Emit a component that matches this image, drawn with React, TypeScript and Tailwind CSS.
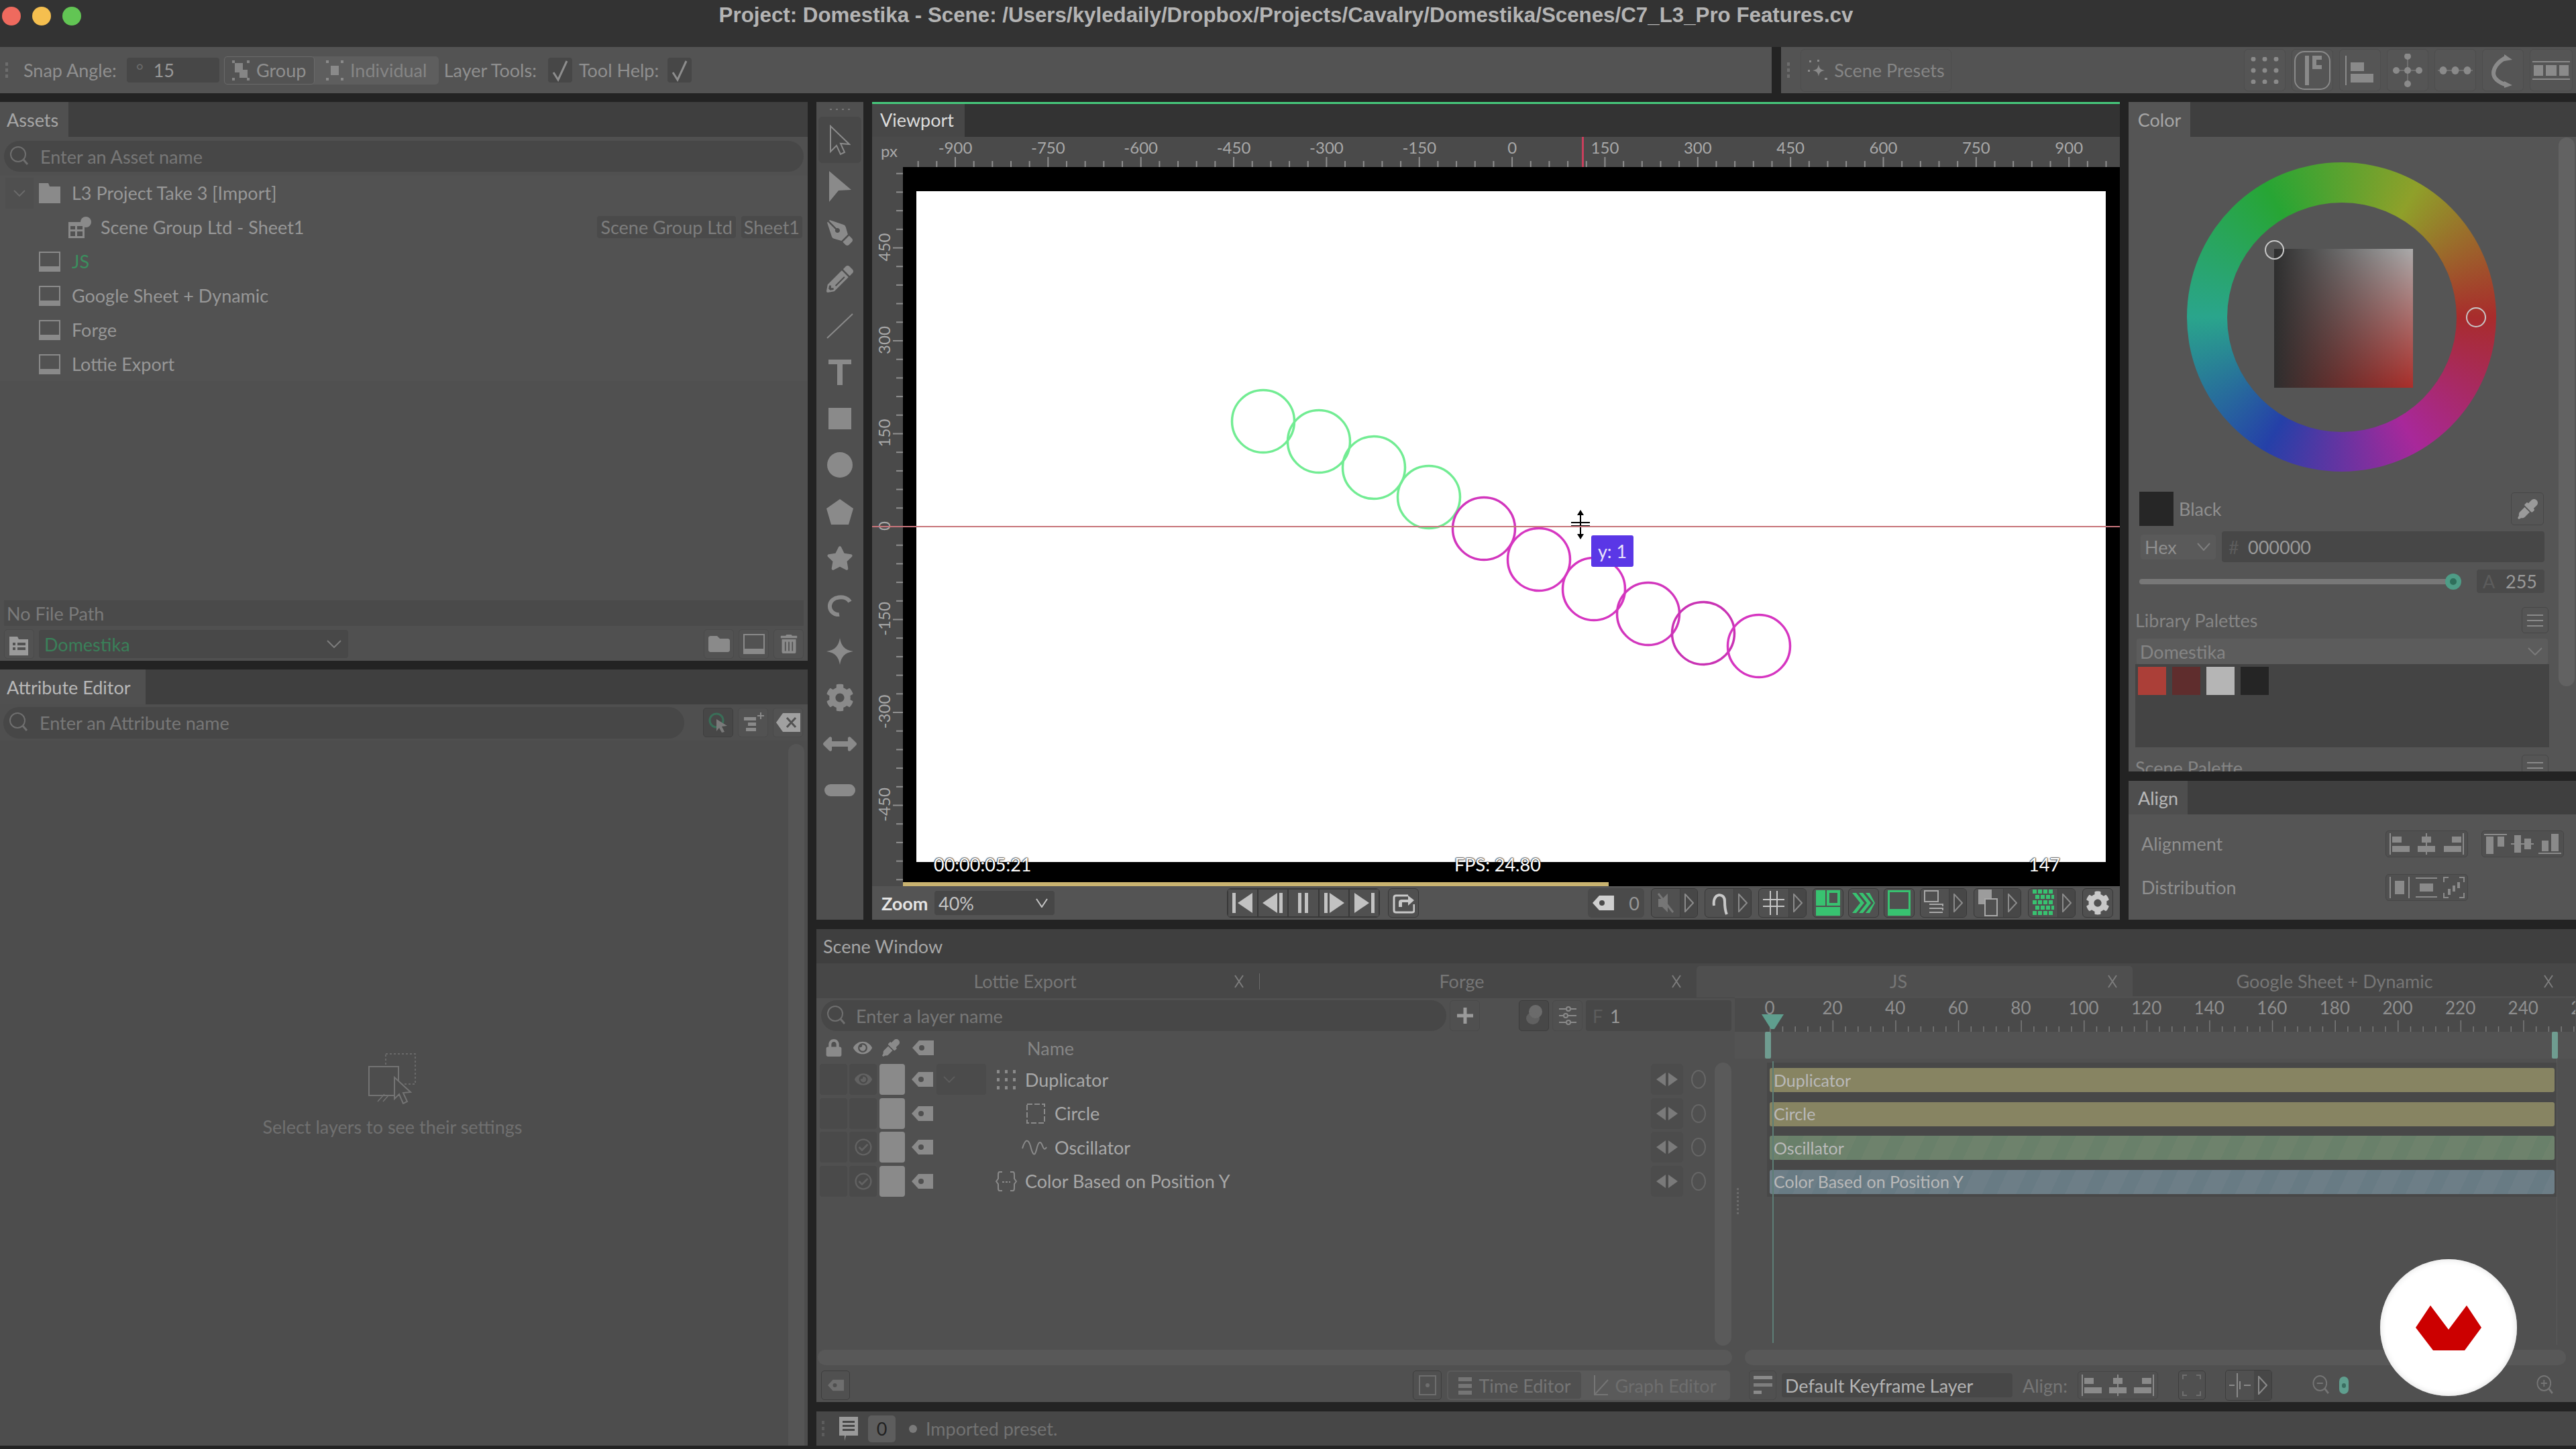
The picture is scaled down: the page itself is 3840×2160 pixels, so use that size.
import React from "react";
import { FaCog, FaStar, FaPenNib, FaPencilAlt, FaArrowsAltH, FaEyeDropper, FaTrashAlt, FaFolder, FaLock, FaEye, FaRegCheckCircle } from "react-icons/fa";

type P = { w: number; h: number; className?: string; children?: React.ReactNode };
const S = ({ w, h, className = "", children }: P) => (
  <svg width={w} height={h} viewBox={`0 0 ${w} ${h}`} fill="currentColor" className={`shrink-0 ${className}`}>{children}</svg>
);

const Mag = ({ className = "text-[#6f6f6f]", sign = "" }: { className?: string; sign?: string }) => (
  <S w={32} h={32} className={className}>
    <circle cx="13" cy="13" r="11" fill="none" stroke="currentColor" strokeWidth="2" />
    <path d="M21 21l6 7" stroke="currentColor" strokeWidth="3" />
    {sign && <path d={sign === "+" ? "M8 13H18M13 8V18" : "M8 13H18"} stroke="currentColor" strokeWidth="2" />}
  </S>
);
const Monitor = () => (
  <S w={32} h={30} className="text-[#8a8a8a]">
    <rect x="1" y="1" width="30" height="28" fill="none" stroke="currentColor" strokeWidth="2" />
    <rect x="1" y="22" width="30" height="7" />
  </S>
);
const Chevron = ({ w = 22, h = 12, className = "text-[#7d7d7d]" }: { w?: number; h?: number; className?: string }) => (
  <S w={w} h={h} className={className}>
    <path d={`M1 1L${w / 2} ${h - 1}L${w - 1} 1`} fill="none" stroke="currentColor" strokeWidth="2" />
  </S>
);
const Tag = ({ className = "text-[#8a8a8a]" }: { className?: string }) => (
  <S w={32} h={24} className={className}>
    <path fillRule="evenodd" d="M0 12L10 1H32V23H10ZM14 8a4 4 0 100 8a4 4 0 000-8Z" />
  </S>
);
const Cross = () => (
  <S w={16} h={22} className="text-[#7c7c7c]">
    <path d="M2 2L14 20M14 2L2 20" fill="none" stroke="currentColor" strokeWidth="2" />
  </S>
);
const Check = () => (
  <S w={26} h={34} className="text-[#8d8d8d]">
    <path d="M3 20L10 31L23 3" fill="none" stroke="currentColor" strokeWidth="3" />
  </S>
);
const Burger = () => (
  <S w={24} h={18} className="text-[#8a8a8a]">
    <path d="M0 1H24M0 9H24M0 17H24" stroke="currentColor" strokeWidth="2" />
  </S>
);
const Grip = ({ className = "text-[#6d6d6d]" }: { className?: string }) => (
  <S w={4} h={24} className={className}>
    <rect y="0" width="4" height="5" />
    <rect y="9" width="4" height="5" />
    <rect y="18" width="4" height="5" />
  </S>
);

const AlignH = ({ flip = false, mid = false }: { flip?: boolean; mid?: boolean }) => (
  <S w={32} h={32} className="text-[#8a8a8a]">
    {mid ? (
      <>
        <rect x="15" y="0" width="2" height="32" />
        <rect x="9" y="5" width="14" height="9" />
        <rect x="3" y="19" width="26" height="9" />
      </>
    ) : flip ? (
      <>
        <rect x="29" y="0" width="2" height="32" />
        <rect x="13" y="5" width="14" height="9" />
        <rect x="1" y="19" width="26" height="9" />
      </>
    ) : (
      <>
        <rect x="1" y="0" width="2" height="32" />
        <rect x="5" y="5" width="14" height="9" />
        <rect x="5" y="19" width="26" height="9" />
      </>
    )}
  </S>
);
const AlignV = ({ kind }: { kind: 0 | 1 | 2 }) => (
  <S w={34} h={32} className="text-[#8a8a8a]">
    {kind === 0 && (
      <>
        <rect x="0" y="1" width="34" height="2" />
        <rect x="3" y="5" width="11" height="26" />
        <rect x="20" y="5" width="10" height="15" />
      </>
    )}
    {kind === 1 && (
      <>
        <rect x="0" y="15" width="34" height="2" />
        <rect x="5" y="3" width="10" height="26" />
        <rect x="20" y="8" width="10" height="16" />
      </>
    )}
    {kind === 2 && (
      <>
        <rect x="0" y="29" width="34" height="2" />
        <rect x="5" y="11" width="10" height="16" />
        <rect x="19" y="1" width="11" height="26" />
      </>
    )}
  </S>
);
const AlignGroup = ({ children }: { children: React.ReactNode }) => (
  <div className="flex h-[40px] w-[123px] items-center justify-around rounded-[5px] border border-[#464646] bg-[#505050]">{children}</div>
);

const Panel = ({ title, w, bright = false }: { title: string; w: number; bright?: boolean }) => (
  <div className="flex h-[52px] shrink-0 bg-[#3f3f3f]">
    <div style={{ width: w }} className={`flex items-center pl-[10px] bg-[#505050] ${bright ? "text-[#b8b8b8]" : "text-[#a6a6a6]"}`}>{title}</div>
  </div>
);

const AssetRow = ({ name, green = false }: { name: string; green?: boolean }) => (
  <div className="flex h-[51px] items-center pl-[58px]">
    <Monitor />
    <span className={`ml-[17px] ${green ? "text-[#3b8f5e]" : "text-[#979797]"}`}>{name}</span>
  </div>
);
const SmallBtn = ({ children }: { children: React.ReactNode }) => (
  <div className="flex h-[44px] w-[45px] items-center justify-center rounded-[5px] border border-[#4a4a4a] bg-[#525252] text-[#8a8a8a]">{children}</div>
);

const Assets = () => (
  <div className="flex h-[833px] shrink-0 flex-col bg-[#505050]">
    <Panel title="Assets" w={102} />
    <div className="mx-[6px] mt-[6px] flex h-[46px] shrink-0 items-center rounded-full bg-[#474747] pl-[8px] text-[#777777]">
      <Mag />
      <span className="ml-[14px]">Enter an Asset name</span>
    </div>
    <div className="mt-[6px] h-[306px] shrink-0 bg-[#525252]">
      <div className="flex h-[51px] items-center pl-[8px]">
        <div className="flex h-[46px] w-[42px] items-center justify-center bg-[#4f4f4f]"><Chevron w={18} h={10} className="text-[#6a6a6a]" /></div>
        <S w={32} h={30} className="ml-[8px] text-[#8a8a8a]"><path d="M0 0H14L16 5H32V30H0Z" /></S>
        <span className="ml-[17px] text-[#979797]">L3 Project Take 3 [Import]</span>
      </div>
      <div className="flex h-[51px] items-center pl-[102px] pr-[8px]">
        <S w={34} h={32} className="text-[#8a8a8a]">
          <path fillRule="evenodd" d="M0 8H24V32H0ZM3 14V19H10V14ZM13 14V19H21V14ZM3 22V29H10V22ZM13 22V29H21V22Z" />
          <circle cx="26" cy="8" r="8" />
        </S>
        <span className="ml-[14px] text-[#979797]">Scene Group Ltd - Sheet1</span>
        <span className="ml-auto rounded-[4px] bg-[#4a4a4a] px-[5px] py-[3px] text-[#7d7d7d]">Scene Group Ltd</span>
        <span className="ml-[8px] rounded-[4px] bg-[#4a4a4a] px-[4px] py-[3px] text-[#7d7d7d]">Sheet1</span>
      </div>
      <AssetRow name="JS" green />
      <AssetRow name="Google Sheet + Dynamic" />
      <AssetRow name="Forge" />
      <AssetRow name="Lottie Export" />
    </div>
    <div className="mx-[6px] mt-auto flex h-[38px] shrink-0 items-center bg-[#4a4a4a] pl-[4px] text-[#7a7a7a]">No File Path</div>
    <div className="mb-[4px] mt-[6px] flex h-[42px] shrink-0 items-center px-[6px]">
      <SmallBtn>
        <S w={30} h={34} className="text-[#9a9a9a]">
          <path fillRule="evenodd" d="M0 6H12L14 10H28V34H0ZM5 15V19H9V15ZM12 15V19H24V15ZM5 22V26H9V22ZM12 22V26H24V22Z" />
        </S>
      </SmallBtn>
      <div className="ml-[7px] flex h-[42px] w-[461px] items-center justify-between rounded-[4px] bg-[#484848] pl-[8px] pr-[10px] text-[#3a8059]">
        Domestika
        <Chevron />
      </div>
      <div className="ml-auto flex gap-[7px]">
        <SmallBtn><FaFolder size={32} /></SmallBtn>
        <SmallBtn><Monitor /></SmallBtn>
        <SmallBtn><FaTrashAlt size={28} /></SmallBtn>
      </div>
    </div>
  </div>
);

const AttributeEditor = () => (
  <div className="flex flex-1 flex-col bg-[#4d4d4d]">
    <Panel title="Attribute Editor" w={217} bright />
    <div className="flex h-[54px] shrink-0 items-center bg-[#4f4f4f] pl-[5px] pr-[7px]">
      <div className="flex h-[47px] w-[1015px] items-center rounded-full bg-[#474747] pl-[8px] text-[#777777]">
        <Mag />
        <span className="ml-[14px]">Enter an Attribute name</span>
      </div>
      <div className="ml-auto flex gap-[7px]">
        <div className="flex h-[44px] w-[45px] items-center justify-center rounded-[5px] border border-[#3f3f3f] bg-[#474747] text-[#3a6e58]">
          <S w={30} h={30}>
            <circle cx="12" cy="12" r="10" fill="none" stroke="currentColor" strokeWidth="3" />
            <path d="M12 10L28 20L20 21L24 29L20 30L16 23L12 28Z" fill="#7a7a7a" />
          </S>
        </div>
        <SmallBtn>
          <S w={32} h={32}>
            <rect x="2" y="8" width="18" height="5" /><rect x="8" y="16" width="12" height="5" /><rect x="5" y="24" width="15" height="5" />
            <path d="M22 6H32M27 1V11" stroke="currentColor" strokeWidth="2" />
          </S>
        </SmallBtn>
        <SmallBtn>
          <S w={36} h={30} className="text-[#a0a0a0]"><path d="M10 1H36V29H10L0 15Z" /><path d="M16 8L29 22M29 8L16 22" stroke="#525252" strokeWidth="3" /></S>
        </SmallBtn>
      </div>
    </div>
    <div className="flex min-h-0 flex-1">
      <div className="flex flex-1 flex-col items-center pt-[466px]">
        <S w={72} h={76} className="-ml-[6px] text-[#737373]">
          <rect x="26" y="1" width="44" height="45" fill="none" stroke="currentColor" strokeWidth="1.5" strokeDasharray="3 3" />
          <rect x="1" y="20" width="44" height="43" fill="#4d4d4d" stroke="currentColor" strokeWidth="2" />
          <path d="M39 36L39 68L46 61L52 75L58 72L52 59L63 58Z" fill="#4d4d4d" stroke="currentColor" strokeWidth="2" />
          <path d="M14 72L24 61M22 72L30 63" stroke="currentColor" strokeWidth="1.5" />
        </S>
        <span className="-ml-[5px] mt-[20px] text-[#707070]">Select layers to see their settings</span>
      </div>
      <div className="mr-[5px] mt-[5px] w-[24px] rounded-t-full bg-[#555555]" />
    </div>
  </div>
);

const tools: React.ReactNode[] = [
  <S w={32} h={46} key="a" className="text-[#8a8a8a]"><path d="M2 2V40L11 31L17 44L23 41L17 28L30 29Z" fill="none" stroke="currentColor" strokeWidth="2" /></S>,
  <S w={33} h={46} key="b" className="text-[#8a8a8a]"><path d="M0 0L33 28L14 29L0 46Z" /></S>,
  <FaPenNib key="c" size={38} className="-scale-y-100 text-[#8a8a8a]" />,
  <FaPencilAlt key="d" size={40} className="-scale-x-100 rotate-90 text-[#8a8a8a]" />,
  <S w={40} h={40} key="e" className="text-[#8a8a8a]"><path d="M1 38L39 2" stroke="currentColor" strokeWidth="2" /></S>,
  <S w={34} h={38} key="f" className="text-[#8a8a8a]"><path d="M0 0H34V7H21V38H13V7H0Z" /></S>,
  <S w={34} h={32} key="g" className="text-[#8a8a8a]"><rect width="34" height="32" /></S>,
  <S w={38} h={38} key="h" className="text-[#8a8a8a]"><ellipse cx="19" cy="19" rx="19" ry="19" /></S>,
  <S w={40} h={38} key="i" className="text-[#8a8a8a]"><path d="M20 0L40 14L33 38H7L0 14Z" /></S>,
  <FaStar key="j" size={40} className="text-[#8a8a8a]" />,
  <S w={38} h={36} key="k" className="text-[#8a8a8a]"><path d="M34 14C27 3 6 6 4 19C3 29 12 34 18 33" fill="none" stroke="currentColor" strokeWidth="6" /></S>,
  <S w={40} h={40} key="l" className="text-[#8a8a8a]"><path d="M20 0C22 12 27 18 40 20C27 22 22 28 20 40C18 28 13 22 0 20C13 18 18 12 20 0Z" /></S>,
  <FaCog key="m" size={42} className="text-[#8a8a8a]" />,
  <FaArrowsAltH key="n" size={50} className="text-[#8a8a8a]" />,
  <S w={46} h={18} key="o" className="text-[#8a8a8a]"><rect width="46" height="18" rx="9" /></S>,
];

const Toolbox = () => (
  <div className="flex w-[70px] shrink-0 flex-col items-center bg-[#4f4f4f]">
    <div className="flex h-[22px] shrink-0 items-center gap-[6px]">
      {[0, 1, 2, 3].map((i) => <i key={i} className="block h-[2px] w-[3px] bg-[#777777]" />)}
    </div>
    {tools.map((t, i) => (
      <div key={i} className={`flex h-[69.27px] w-[64px] shrink-0 items-center justify-center rounded-[6px] ${i === 0 ? "bg-[#484848]" : ""}`}>{t}</div>
    ))}
  </div>
);

const TopRuler = () => {
  const x0 = 123;
  const step = 138.35;
  const ticks: number[] = [];
  for (let i = -2; i <= 62; i++) ticks.push(i);
  const labels = [-900, -750, -600, -450, -300, -150, 0, 150, 300, 450, 600, 750, 900];
  return (
    <svg width={1860} height={45} className="block shrink-0">
      {ticks.map((t) => {
        const x = x0 + (t * step) / 5;
        return <rect key={t} x={x} y={t % 5 === 0 ? 30 : 36} width={2} height={t % 5 === 0 ? 15 : 9} fill="#8f8f8f" />;
      })}
      {labels.map((l, i) => (
        <text key={l} x={x0 + i * step + 1} y={25} textAnchor="middle" fontSize={24} fill="#a8a8a8">{l}</text>
      ))}
      <text x={13} y={30} fontSize={24} fill="#a8a8a8">px</text>
      <rect x={1058} y={0} width={3} height={45} fill="#c73f5c" />
    </svg>
  );
};

const LeftRuler = () => {
  const y0 = 535;
  const step = 138.5;
  const ticks: number[] = [];
  for (let i = -19; i <= 19; i++) ticks.push(i);
  const labels = [450, 300, 150, 0, -150, -300, -450];
  return (
    <svg width={46} height={1072} className="block shrink-0">
      {ticks.map((t) => {
        const y = y0 + (t * step) / 5;
        return <rect key={t} x={t % 5 === 0 ? 31 : 36} y={y} width={t % 5 === 0 ? 15 : 10} height={2} fill="#8f8f8f" />;
      })}
      {labels.map((l, i) => {
        const y = y0 + (i - 3) * step;
        return <text key={l} x={27} y={y} transform={`rotate(-90 27 ${y})`} textAnchor="middle" fontSize={24} fill="#a8a8a8">{l}</text>;
      })}
    </svg>
  );
};

const CIRCLES = [
  [1883, 628, "#72ec93"], [1966, 658, "#72ec93"], [2048, 697, "#72ec93"], [2130, 741, "#72ec93"],
  [2212, 788, "#d236bd"], [2294, 834, "#d636c1"], [2376, 878, "#d636c1"], [2457, 915, "#d236bd"], [2539, 944, "#c933b4"], [2622, 963, "#d636c1"],
] as const;

const Canvas = () => (
  <div className="relative h-[1000px] w-[1773px] bg-white">
    <svg width={1773} height={1000} className="absolute inset-0">
      {CIRCLES.map(([x, y, c], i) => (
        <circle key={i} cx={x - 1366} cy={y - 285} r={46.5} fill="none" stroke={c} strokeWidth={3.5} />
      ))}
    </svg>
    <svg width={40} height={46} viewBox="0 0 40 46" className="absolute left-[970px] top-[474px]">
      <g fill="none">
        <path d="M20 4V42M5 20H35M5 25H35" stroke="#fff" strokeWidth="6" opacity=".8" />
        <path d="M20 4V42M6 20H34M6 25H34" stroke="#000" strokeWidth="2" />
      </g>
      <path d="M20 1L25 9H15ZM20 45L25 37H15Z" fill="#000" />
    </svg>
    <div className="absolute left-[1006px] top-[513px] flex h-[47px] w-[63px] items-center justify-center rounded-[3px] bg-[#5a37e6] text-[#e8e4fb]">y: 1</div>
  </div>
);

const TBtn = ({ children, className = "" }: { children: React.ReactNode; className?: string }) => (
  <div className={`flex h-[42px] items-center justify-center border border-[#383838] bg-[#505050] ${className}`}>{children}</div>
);
const Tri = () => (
  <S w={14} h={28} className="text-[#8a8a8a]"><path d="M1 1L13 14L1 27Z" fill="none" stroke="currentColor" strokeWidth="2" /></S>
);
const Pair = ({ children, w = 70 }: { children: React.ReactNode; w?: number }) => (
  <div style={{ width: w }} className="flex h-[44px] overflow-hidden rounded-[6px] border border-[#383838] bg-[#505050]">
    <div className="flex flex-1 items-center justify-center">{children}</div>
    <div className="flex w-[26px] items-center justify-center border-l border-[#3f3f3f] bg-[#474747]"><Tri /></div>
  </div>
);
const Single = ({ children, className = "bg-[#505050]" }: { children: React.ReactNode; className?: string }) => (
  <div className={`flex h-[44px] w-[46px] items-center justify-center rounded-[6px] border border-[#383838] ${className}`}>{children}</div>
);

const Controls = () => (
  <div className="flex h-[50px] shrink-0 items-center bg-[#545454] pl-[14px]">
    <span className="w-[79px] font-bold text-[#e4e4e4]">Zoom</span>
    <div className="flex h-[36px] w-[179px] items-center justify-between rounded-[4px] bg-[#474747] pl-[6px] pr-[10px] text-[#c4c4c4]">
      40%
      <Chevron w={18} h={14} className="text-[#c4c4c4]" />
    </div>
    <div className="ml-[257px] flex h-[44px] w-[228px] overflow-hidden rounded-[6px] border border-[#383838] text-[#c2c2c2]">
      <TBtn className="w-[46px]"><S w={32} h={30}><rect x="0" y="0" width="5" height="30" /><path d="M30 0V30L8 15Z" /></S></TBtn>
      <TBtn className="w-[46px]"><S w={32} h={30}><path d="M22 0V30L0 15Z" /><rect x="25" y="0" width="5" height="30" /></S></TBtn>
      <TBtn className="w-[46px]"><S w={20} h={30}><rect x="2" width="5" height="30" /><rect x="12" width="5" height="30" /></S></TBtn>
      <TBtn className="w-[46px]"><S w={32} h={30}><rect x="2" width="5" height="30" /><path d="M10 0V30L32 15Z" /></S></TBtn>
      <TBtn className="w-[46px]"><S w={32} h={30}><path d="M2 0V30L24 15Z" /><rect x="27" width="5" height="30" /></S></TBtn>
    </div>
    <Single className="ml-[12px] bg-[#505050]">
      <S w={34} h={32} className="text-[#c8c8c8]">
        <path d="M24 5H6C4 5 3 6 3 8V27C3 29 4 30 6 30H30C32 30 33 29 33 27V18" fill="none" stroke="currentColor" strokeWidth="3" />
        <path d="M10 22V15C10 12 12 11 14 11H24V5L33 12L24 20V15H15V22Z" />
      </S>
    </Single>
    <div className="ml-[252px] flex h-[44px] w-[84px] items-center justify-center gap-[22px] rounded-[6px] bg-[#4a4a4a] text-[#969696]">
      <Tag className="text-[#cfcfcf]" />
      0
    </div>
    <div className="ml-[10px] flex gap-[10px]">
      <Pair>
        <S w={30} h={36} className="text-[#767676]"><path d="M4 12H10L18 4V32L10 24H4Z" /><path d="M4 4L26 32" stroke="currentColor" strokeWidth="3" /></S>
      </Pair>
      <Pair>
        <S w={28} h={36} className="text-[#c8c8c8]"><path d="M6 22C3 2 23 2 22 16C22 22 22 28 25 35" fill="none" stroke="currentColor" strokeWidth="4" /></S>
      </Pair>
      <Pair w={72}>
        <S w={32} h={36} className="text-[#c8c8c8]"><path d="M11 0V36M21 0V36M0 13H32M0 23H32" stroke="currentColor" strokeWidth="2" /></S>
      </Pair>
    </div>
    <div className="ml-[9px] flex gap-[7px]">
      <Single>
        <S w={36} h={38} className="text-[#38c270]">
          <path fillRule="evenodd" d="M0 0H14V23H0ZM16 0H36V23H16ZM20 4V19H32V4ZM0 25H36V38H0Z" />
        </S>
      </Single>
      <Single>
        <S w={34} h={30} className="text-[#38c270]">
          <path d="M0 0L12 15L0 30H6L18 15L6 0ZM10 0L22 15L10 30H16L28 15L16 0ZM20 0L32 15L20 30H26L34 15L26 0Z" />
        </S>
      </Single>
      <Single>
        <S w={34} h={38} className="text-[#38c270]">
          <path fillRule="evenodd" d="M0 0H34V38H0ZM3 3V28H31V3Z" />
        </S>
      </Single>
    </div>
    <div className="ml-[8px] flex gap-[10px]">
      <Pair>
        <S w={32} h={38} className="text-[#a8a8a8]">
          <rect x="1" y="1" width="20" height="16" fill="none" stroke="currentColor" strokeWidth="2" />
          <path d="M8 21H28V24M8 27H28V30M8 33H28" fill="none" stroke="currentColor" strokeWidth="2" />
        </S>
      </Pair>
      <Pair w={71}>
        <S w={32} h={40} className="text-[#a8a8a8]">
          <rect x="0" y="0" width="20" height="22" fill="#9c9c9c" />
          <rect x="10" y="14" width="18" height="25" fill="#505050" stroke="currentColor" strokeWidth="2" />
        </S>
      </Pair>
      <Pair w={71}>
        <S w={32} h={40} className="text-[#38c270]">
          {[0, 8, 16, 24, 32].map((y) => [0, 8, 16, 24].map((x) => (
            <rect key={`${x}${y}`} x={x + ((y / 8) % 2) * 4} y={y} width="6" height="6" />
          )))}
        </S>
      </Pair>
    </div>
    <Single className="ml-[10px] bg-[#505050]"><FaCog size={36} className="text-[#c8c8c8]" /></Single>
  </div>
);

const Viewport = () => (
  <div className="relative flex w-[1860px] shrink-0 flex-col bg-[#4a4a4a]">
    <div className="h-[3px] shrink-0 bg-[#46c97c]" />
    <div className="flex h-[49px] shrink-0 bg-[#333333]">
      <div className="flex w-[138px] items-center bg-[#474747] pb-[2px] pl-[12px] text-[#dcdcdc]">Viewport</div>
    </div>
    <TopRuler />
    <div className="flex h-[1072px] shrink-0">
      <LeftRuler />
      <div className="flex flex-1 flex-col bg-black">
        <div className="ml-[20px] mt-[36px]"><Canvas /></div>
        <div className="mt-auto h-[6px] w-[1052px] bg-[#c9b370]" />
      </div>
    </div>
    <Controls />
    <div className="absolute inset-x-0 top-[632px] h-[2px] bg-[#c7747a]" />
    <span className="absolute left-[92px] top-[1123px] text-white [text-shadow:0_0_2px_#000,0_0_2px_#000,0_0_1px_#000]">00:00:05:21</span>
    <span className="absolute left-[868px] top-[1123px] text-white [text-shadow:0_0_2px_#000,0_0_2px_#000,0_0_1px_#000]">FPS: 24.80</span>
    <span className="absolute left-[1724px] top-[1123px] text-white [text-shadow:0_0_2px_#000,0_0_2px_#000,0_0_1px_#000]">147</span>
  </div>
);

const Wheel = () => (
  <div className="relative ml-[87px] mt-[38px] flex h-[461px] w-[461px] items-center justify-center rounded-full bg-[conic-gradient(from_90deg,#a82c2c,#a8289a_60deg,#2540a8_120deg,#2aa58c_180deg,#27a534_240deg,#8fa02a_300deg,#a82c2c)]">
    <div className="flex h-[342px] w-[342px] items-center justify-center rounded-full bg-[#555555]">
      <div className="ml-[6px] mt-[4px] h-[207px] w-[207px] bg-[linear-gradient(to_right,#2e2e2e,transparent),linear-gradient(to_bottom,#ababab,#ab2e2a)]" />
    </div>
    <div className="absolute left-[116px] top-[116px] h-[29px] w-[29px] rounded-full border-2 border-[#c8c8c8]" />
    <div className="absolute left-[416px] top-[216px] h-[30px] w-[30px] rounded-full border-2 border-[#c8c8c8]" />
  </div>
);

const ColorPanel = () => (
  <div className="flex h-[998px] shrink-0 flex-col bg-[#555555]">
    <div className="flex h-[52px] shrink-0 bg-[#3f3f3f]">
      <div className="flex w-[92px] items-center justify-center bg-[#555555] text-[#a6a6a6]">Color</div>
    </div>
    <div className="flex min-h-0 flex-1 overflow-hidden">
      <div className="w-[640px] shrink-0">
        <Wheel />
        <div className="mt-[30px] flex h-[51px] items-center pl-[16px] pr-[21px] text-[#8f8f8f]">
          <div className="h-[51px] w-[51px] bg-[#262626]" />
          <span className="ml-[8px]">Black</span>
          <div className="ml-auto flex h-[49px] w-[49px] items-center justify-center rounded-[5px] border border-[#474747] bg-[#555555]">
            <FaEyeDropper size={30} className="text-[#9a9a9a]" />
          </div>
        </div>
        <div className="mt-[8px] flex h-[46px] items-center pl-[18px] pr-[20px]">
          <div className="flex h-[37px] w-[112px] items-center justify-between rounded-[4px] bg-[#5a5a5a] pl-[6px] pr-[8px] text-[#8f8f8f]">
            Hex
            <Chevron w={20} h={12} className="text-[#7f7f7f]" />
          </div>
          <div className="ml-[9px] flex h-[46px] flex-1 items-center rounded-[4px] bg-[#474747] pl-[10px] text-[#9a9a9a]">
            <span className="w-[29px] text-[#5c5c5c]">#</span>000000
          </div>
        </div>
        <div className="mt-[11px] flex h-[35px] items-center pl-[16px] pr-[20px]">
          <div className="h-[8px] w-[465px] rounded-full bg-[#787878]" />
          <div className="-ml-[9px] flex h-[24px] w-[24px] items-center justify-center rounded-full bg-[#4e9c86]">
            <div className="h-[10px] w-[10px] rounded-full bg-[#2f6e5b]" />
          </div>
          <div className="ml-auto flex h-[35px] w-[101px] items-center rounded-[4px] bg-[#4a4a4a] pl-[9px] text-[#9a9a9a]">
            <span className="w-[34px] text-[#5c5c5c]">A</span>255
          </div>
        </div>
        <div className="mt-[21px] flex h-[39px] items-center pl-[10px] pr-[14px] text-[#858585]">
          Library Palettes
          <div className="ml-auto flex h-[39px] w-[40px] items-center justify-center rounded-[5px] border border-[#474747]"><Burger /></div>
        </div>
        <div className="ml-[12px] mr-[15px] mt-[8px] flex h-[38px] items-center justify-between rounded-[3px] bg-[#5c5c5c] pl-[5px] pr-[8px] text-[#858585]">
          Domestika
          <Chevron w={22} h={12} className="text-[#7a7a7a]" />
        </div>
        <div className="ml-[10px] mr-[13px] flex h-[124px] gap-[9px] bg-[#444444] pl-[4px] pt-[4px]">
          <div className="h-[42px] w-[42px] bg-[#ab3f38]" />
          <div className="h-[42px] w-[42px] bg-[#5f2d2d]" />
          <div className="h-[42px] w-[42px] bg-[#b5b5b5]" />
          <div className="h-[42px] w-[42px] bg-[#252525]" />
        </div>
        <div className="mt-[11px] flex h-[39px] items-center pl-[10px] pr-[14px] text-[#858585]">
          Scene Palette
          <div className="ml-auto flex h-[39px] w-[40px] items-center justify-center rounded-[5px] border border-[#474747]"><Burger /></div>
        </div>
      </div>
      <div className="ml-[1px] mt-[1px] h-[818px] w-[24px] rounded-full bg-[#626262]" />
    </div>
  </div>
);

const AlignPanel = () => (
  <div className="flex flex-1 flex-col bg-[#555555]">
    <div className="flex h-[50px] shrink-0 bg-[#3f3f3f]">
      <div className="flex w-[88px] items-center justify-center bg-[#4e4e4e] text-[#b8b8b8]">Align</div>
    </div>
    <div className="mt-[11px] flex h-[65px] items-center pl-[19px] text-[#8f8f8f]">
      <span className="w-[364px]">Alignment</span>
      <AlignGroup><AlignH /><AlignH mid /><AlignH flip /></AlignGroup>
      <div className="ml-[20px]">
        <AlignGroup><AlignV kind={0} /><AlignV kind={1} /><AlignV kind={2} /></AlignGroup>
      </div>
    </div>
    <div className="flex h-[65px] items-center pl-[19px] text-[#8f8f8f]">
      <span className="w-[364px]">Distribution</span>
      <AlignGroup>
        <S w={30} h={32} className="text-[#8a8a8a]"><path d="M1 0V32M29 0V32" stroke="currentColor" strokeWidth="2" /><rect x="8" y="6" width="14" height="20" /></S>
        <S w={32} h={32} className="text-[#8a8a8a]"><path d="M0 2H32M0 30H32" stroke="currentColor" strokeWidth="2" /><rect x="6" y="10" width="20" height="12" /></S>
        <S w={32} h={32} className="text-[#8a8a8a]"><path d="M1 8V1H8M24 1H31V8M1 24V31H8M24 31H31V24" fill="none" stroke="currentColor" strokeWidth="2" /><rect x="7" y="18" width="4" height="9" /><rect x="14" y="13" width="4" height="9" /><rect x="21" y="8" width="4" height="9" /></S>
      </AlignGroup>
    </div>
  </div>
);

const Tab = ({ label, labelW, gap = 10, w, active = false, sep = false }: { label: string; labelW: number; gap?: number; w: number; active?: boolean; sep?: boolean }) => (
  <div style={{ width: w }} className={`mt-[4px] flex h-[47px] shrink-0 items-center rounded-t-[5px] pb-[2px] ${active ? "bg-[#4f4f4f]" : ""}`}>
    <span style={{ width: labelW, marginRight: gap }} className="text-center text-[#767676]">{label}</span>
    <Cross />
    {sep && <i className="ml-[22px] block h-[24px] w-[1px] bg-[#6a6a6a]" />}
  </div>
);

const LAYERS = [
  { name: "Duplicator", indent: false, vis: "eye", exp: true, icon: "dup" },
  { name: "Circle", indent: true, vis: "", exp: false, icon: "rect" },
  { name: "Oscillator", indent: true, vis: "check", exp: false, icon: "wave" },
  { name: "Color Based on Position Y", indent: false, vis: "check", exp: false, icon: "code" },
];

const LayerIcon = ({ kind }: { kind: string }) => {
  if (kind === "dup")
    return (
      <S w={32} h={32} className="text-[#8a8a8a]">
        {[2, 14, 26].map((y) => [2, 14, 26].map((x) => <rect key={`${x}-${y}`} x={x} y={y} width="4" height="5" />))}
      </S>
    );
  if (kind === "rect")
    return (
      <S w={32} h={32} className="text-[#8a8a8a]">
        <rect x="3" y="2" width="26" height="28" fill="none" stroke="currentColor" strokeWidth="2" strokeDasharray="8 3" />
      </S>
    );
  if (kind === "wave")
    return (
      <S w={38} h={32} className="-ml-[5px] text-[#8a8a8a]">
        <path d="M1 18C5 5 9 2 13 14C16 26 19 32 22 20C25 7 28 6 31 14C33 20 35 20 37 16" fill="none" stroke="currentColor" strokeWidth="2" />
      </S>
    );
  return (
    <S w={32} h={32} className="text-[#8a8a8a]">
      <path d="M10 2H6C4 2 4 4 4 8V12L1 16L4 20V24C4 28 4 30 6 30H10M22 2H26C28 2 28 4 28 8V12L31 16L28 20V24C28 28 28 30 26 30H22" fill="none" stroke="currentColor" strokeWidth="2" />
      <path d="M10 17H22" stroke="currentColor" strokeWidth="2" strokeDasharray="3 2" />
    </S>
  );
};

const LayerRow = ({ l }: { l: (typeof LAYERS)[number] }) => (
  <div className="flex h-[50.5px] w-full items-center pl-[5px]">
    <div className="h-[46px] w-[41px] rounded-[4px] bg-[#4a4a4a]" />
    <div className="ml-[3px] flex h-[46px] w-[41px] items-center justify-center rounded-[4px] bg-[#4a4a4a] text-[#626262]">
      {l.vis === "eye" && <FaEye size={26} />}
      {l.vis === "check" && <FaRegCheckCircle size={26} />}
    </div>
    <div className="ml-[4px] h-[46px] w-[38px] rounded-[4px] bg-[#8a8a8a]" />
    <div className="ml-[10px]"><Tag /></div>
    <div className={`ml-[5px] flex h-[46px] w-[74px] items-center pl-[10px] ${l.exp ? "rounded-[4px] bg-[#4b4b4b]" : ""}`}>
      {l.exp && <Chevron w={18} h={10} className="text-[#5c5c5c]" />}
    </div>
    <div className={`flex w-[32px] justify-center ${l.indent ? "ml-[58px]" : "ml-[14px]"}`}><LayerIcon kind={l.icon} /></div>
    <span className="ml-[12px] text-[#a8a8a8]">{l.name}</span>
    <div className="ml-auto flex h-[46px] w-[48px] items-center justify-center gap-[4px] rounded-[5px] bg-[#4c4c4c] text-[#7a7a7a]">
      <S w={14} h={20}><path d="M14 0V20L0 10Z" /></S>
      <S w={14} h={20}><path d="M0 0V20L14 10Z" /></S>
    </div>
    <S w={24} h={30} className="ml-[11px] mr-[7px] text-[#666666]"><ellipse cx="12" cy="15" rx="10" ry="13" fill="none" stroke="currentColor" strokeWidth="2" /></S>
  </div>
);

const SceneLeft = () => (
  <div className="flex w-[1367px] shrink-0 flex-col">
    <div className="flex h-[52px] shrink-0 items-center pl-[7px]">
      <div className="flex h-[46px] w-[932px] items-center rounded-full bg-[#474747] pl-[8px] text-[#777777]">
        <Mag />
        <span className="ml-[12px]">Enter a layer name</span>
      </div>
      <div className="ml-[5px] flex h-[46px] w-[45px] items-center justify-center rounded-[5px] border border-[#4a4a4a] text-[#9a9a9a]">
        <S w={26} h={26}><path d="M13 1V25M1 13H25" stroke="currentColor" strokeWidth="5" /></S>
      </div>
      <div className="ml-[58px] flex h-[46px] w-[45px] items-center justify-center rounded-[5px] border border-[#3d3d3d] bg-[#484848] text-[#6b6b6b]">
        <S w={26} h={32}><ellipse cx="15" cy="10" rx="10" ry="10" /><ellipse cx="11" cy="20" rx="10" ry="9" opacity=".7" /></S>
      </div>
      <div className="ml-[5px] flex h-[46px] w-[45px] items-center justify-center rounded-[5px] border border-[#4a4a4a] text-[#8a8a8a]">
        <S w={30} h={30}><path d="M2 5H12M20 5H28M2 15H8M16 15H28M2 25H12M20 25H28" stroke="currentColor" strokeWidth="2" /><circle cx="16" cy="5" r="3" fill="none" stroke="currentColor" strokeWidth="2" /><circle cx="12" cy="15" r="3" fill="none" stroke="currentColor" strokeWidth="2" /><circle cx="16" cy="25" r="3" fill="none" stroke="currentColor" strokeWidth="2" /></S>
      </div>
      <div className="ml-[5px] flex h-[46px] w-[217px] items-center rounded-[4px] bg-[#474747] pl-[10px] text-[#9a9a9a]">
        <span className="w-[26px] text-[#5c5c5c]">F</span>1
      </div>
    </div>
    <div className="flex h-[44px] shrink-0 items-center pl-[13px] text-[#8a8a8a]">
      <FaLock size={26} className="mr-[16px]" />
      <FaEye size={28} className="mr-[15px]" />
      <FaEyeDropper size={26} className="mr-[19px]" />
      <Tag />
      <span className="ml-[139px] text-[#858585]">Name</span>
    </div>
    <div className="flex min-h-0 flex-1">
      <div className="flex flex-1 flex-col">
        <div className="bg-[#505050]">
          {LAYERS.map((l) => <LayerRow key={l.name} l={l} />)}
        </div>
      </div>
      <div className="ml-[5px] mr-[3px] h-[422px] w-[25px] rounded-full bg-[#5a5a5a]" />
    </div>
    <div className="mx-[2px] mb-[5px] mt-[5px] h-[23px] shrink-0 rounded-full bg-[#585858]" />
    <div className="flex h-[50px] shrink-0 items-center pl-[7px] pr-[5px] text-[#757575]">
      <div className="flex h-[44px] w-[43px] items-center justify-center rounded-[5px] border border-[#3d3d3d]">
        <Tag className="rotate-0 scale-75 text-[#6e6e6e]" />
      </div>
      <div className="ml-auto flex h-[44px] w-[43px] items-center justify-center rounded-[5px] border border-[#3d3d3d]">
        <S w={26} h={30} className="text-[#6e6e6e]"><rect x="1" y="1" width="24" height="28" fill="none" stroke="currentColor" strokeWidth="2" /><circle cx="13" cy="15" r="3" /></S>
      </div>
      <div className="ml-[8px] flex h-[44px] w-[422px] items-center rounded-[5px] bg-[#5a5a5a] p-[2px]">
        <div className="flex h-full w-[198px] items-center justify-center gap-[10px] rounded-[4px] bg-[#505050]">
          <S w={20} h={30} className="text-[#757575]"><rect y="3" width="20" height="6" /><rect y="13" width="20" height="6" /><rect y="23" width="20" height="6" /></S>
          Time Editor
        </div>
        <div className="flex flex-1 items-center justify-center gap-[8px] text-[#6e6e6e]">
          <S w={24} h={32} className="text-[#757575]"><path d="M2 1V30H22M2 30L22 8" fill="none" stroke="currentColor" strokeWidth="2" /></S>
          Graph Editor
        </div>
      </div>
    </div>
  </div>
);

const TimelineRuler = () => {
  const x0 = 52;
  const f = 4.68;
  const ticks: number[] = [];
  for (let i = 0; i <= 268; i += 4) ticks.push(i);
  const labels: number[] = [];
  for (let i = 0; i <= 260; i += 20) labels.push(i);
  return (
    <svg width={1253} height={53} className="-mt-[3px] block shrink-0 bg-[linear-gradient(to_bottom,#505050_3px,#4a4a4a_3px)]">
      {ticks.map((t) => (
        <rect key={t} x={x0 + t * f} y={t % 20 === 0 ? 36 : 45} width={1.5} height={t % 20 === 0 ? 17 : 8} fill="#7a7a7a" />
      ))}
      {labels.map((l) => (
        <text key={l} x={x0 + l * f} y={27} textAnchor="middle" fontSize={26} fill="#8f8f8f">{l}</text>
      ))}
      <path d="M40 27H73L59 49H54Z" fill="#5f9e8e" />
    </svg>
  );
};

const Track = ({ label, className }: { label: string; className: string }) => (
  <div className={`ml-[4px] flex h-[36px] w-[1170px] items-center rounded-[3px] pl-[6px] text-[25px] text-[#b9b9b9] ${className}`}>{label}</div>
);

const Timeline = () => (
  <div className="relative ml-[2px] flex flex-1 flex-col">
    <TimelineRuler />
    <div className="relative h-[40px] shrink-0 bg-[#535353]">
      <div className="absolute left-[45px] top-0 h-[40px] w-[9px] rounded-[2px] bg-[#6f9c90]" />
      <div className="absolute left-[1218px] top-0 h-[40px] w-[9px] rounded-[2px] bg-[#6f9c90]" />
    </div>
    <div className="flex min-h-0 flex-1 bg-[#505050] pl-[48px]">
      <div className="mb-[2px] flex w-[1178px] flex-col border-r border-[#5a5a5a]">
        <div className="mt-[6px] flex h-[200px] flex-col gap-[14.6px] bg-[#484848] pt-[8px]">
          <Track label="Duplicator" className="bg-[#878462]" />
          <Track label="Circle" className="bg-[#878462]" />
          <Track label="Oscillator" className="bg-[repeating-linear-gradient(115deg,#6e826c_0px,#6e826c_26px,#69806a_26px,#69806a_46px)]" />
          <Track label="Color Based on Position Y" className="bg-[repeating-linear-gradient(115deg,#6d7e87_0px,#6d7e87_26px,#687b84_26px,#687b84_46px)]" />
        </div>
      </div>
    </div>
    <div className="mx-[15px] mb-[5px] mt-[5px] h-[23px] shrink-0 rounded-full bg-[#585858]" />
    <div className="flex h-[50px] shrink-0 items-center pl-[21px] text-[#7a7a7a]">
      <div className="flex h-[44px] w-[41px] items-center justify-center rounded-[5px] border border-[#484848]">
        <S w={32} h={32} className="text-[#8a8a8a]"><rect x="2" y="2" width="28" height="5" /><rect x="2" y="13" width="28" height="5" opacity=".8" /><rect x="2" y="24" width="12" height="5" /></S>
      </div>
      <div className="ml-[8px] flex h-[36px] w-[344px] items-center rounded-[4px] bg-[#474747] pl-[5px] text-[#b4b4b4]">Default Keyframe Layer</div>
      <span className="ml-[15px] text-[#767676]">Align:</span>
      <div className="ml-[15px] flex h-[42px] w-[120px] items-center justify-around rounded-[5px] border border-[#464646]">
        <AlignH /><AlignH mid /><AlignH flip />
      </div>
      <div className="ml-[30px] flex h-[44px] w-[41px] items-center justify-center rounded-[5px] border border-[#3d3d3d]">
        <S w={30} h={34} className="text-[#6e6e6e]"><path d="M2 8V2H8M22 2H28V8M2 26V32H8M22 32H28V26" fill="none" stroke="currentColor" strokeWidth="2" /></S>
      </div>
      <div className="ml-[29px] flex h-[46px] w-[70px] overflow-hidden rounded-[5px] border border-[#3d3d3d]">
        <div className="flex flex-1 items-center justify-center">
          <S w={32} h={36} className="text-[#8a8a8a]"><path d="M12 0V36M0 18H8M16 12V24M22 18H32" stroke="currentColor" strokeWidth="2" /></S>
        </div>
        <div className="flex w-[26px] items-center justify-center bg-[#474747]"><Tri /></div>
      </div>
      <div className="ml-[58px]"><Mag sign="-" className="scale-x-90 text-[#757575]" /></div>
      <div className="ml-[10px] flex h-[26px] w-[14px] items-center justify-center rounded-full bg-[#5f9e8e]"><i className="block h-[7px] w-[6px] rounded-full bg-[#3a6e61]" /></div>
      <div className="ml-[278px]"><Mag sign="+" className="scale-x-90 text-[#757575]" /></div>
    </div>
    <div className="absolute left-[56px] top-[94px] h-[420px] w-[2px] bg-[#5d7e76]" />
    <div className="absolute left-[3px] top-[283px] h-[40px] w-[3px] bg-[repeating-linear-gradient(to_bottom,#6a6a6a_0px,#6a6a6a_3px,transparent_3px,transparent_6px)]" />
  </div>
);

const SceneWindow = () => (
  <div className="flex h-[705px] shrink-0 flex-col bg-[#505050]">
    <div className="flex h-[51px] shrink-0 bg-[#3f3f3f]">
      <div className="flex w-[205px] items-center pl-[10px] text-[#a6a6a6]">Scene Window</div>
    </div>
    <div className="flex h-[52px] shrink-0 bg-[#474747]">
      <Tab label="Lottie Export" labelW={622} gap={0} w={662} sep />
      <Tab label="Forge" labelW={600} gap={12} w={650} />
      <Tab label="JS" labelW={602} gap={10} w={650} active />
      <Tab label="Google Sheet + Dynamic" labelW={602} gap={10} w={660} />
    </div>
    <div className="flex min-h-0 flex-1">
      <SceneLeft />
      <Timeline />
    </div>
  </div>
);

const RightIcon = ({ children, w = 62 }: { children: React.ReactNode; w?: number }) => (
  <div style={{ width: w }} className="flex h-[63px] items-center justify-center rounded-[6px] border border-[#4d4d4d] bg-[#555555] text-[#8a8a8a]">{children}</div>
);

const TopBar = () => (
  <>
    <div className="relative flex h-[70px] shrink-0 justify-center bg-[#333333] pt-[5px]">
      <div className="absolute left-[3px] top-[10px] flex gap-[17px]">
        <i className="block h-[28px] w-[28px] rounded-full bg-[#ef6a5e]" />
        <i className="block h-[28px] w-[28px] rounded-full bg-[#f5bf4f]" />
        <i className="block h-[28px] w-[28px] rounded-full bg-[#62c554]" />
      </div>
      <span className="-ml-[6px] font-['Liberation_Sans'] text-[31.3px] font-bold leading-[36px] text-[#b4b4b4]">Project: Domestika - Scene: /Users/kyledaily/Dropbox/Projects/Cavalry/Domestika/Scenes/C7_L3_Pro Features.cv</span>
    </div>
    <div className="flex h-[69px] shrink-0 gap-[14px]">
      <div className="flex w-[2641px] items-center bg-[#535353] pl-[8px] text-[#8f8f8f]">
        <Grip />
        <span className="ml-[23px]">Snap Angle:</span>
        <div className="ml-[15px] flex h-[37px] w-[138px] items-center rounded-[4px] bg-[#474747] pl-[14px] text-[#999999]">
          <span className="w-[26px] text-[#6a6a6a]">°</span>15
        </div>
        <div className="ml-[7px] flex h-[42px] w-[320px] items-center rounded-[5px] bg-[#5e5e5e]">
          <div className="flex h-[42px] w-[135px] items-center justify-center gap-[10px] rounded-[5px] border border-[#6a6a6a] bg-[#535353] text-[#8f8f8f]">
            <S w={26} h={30} className="text-[#858585]"><path d="M0 0H4V4H0ZM22 0H26V4H22ZM0 26H4V30H0ZM22 26H26V30H22Z" /><rect x="4" y="4" width="12" height="14" /><rect x="11" y="14" width="12" height="12" /></S>
            Group
          </div>
          <div className="flex flex-1 items-center justify-center gap-[10px] text-[#858585]">
            <S w={26} h={30} className="text-[#8a8a8a]"><path d="M0 0H4V4H0ZM22 0H26V4H22ZM0 26H4V30H0ZM22 26H26V30H22Z" /><rect x="7" y="8" width="12" height="14" /></S>
            Individual
          </div>
        </div>
        <span className="ml-[8px]">Layer Tools:</span>
        <div className="ml-[17px] flex h-[37px] w-[36px] items-center justify-center rounded-[4px] bg-[#474747]"><Check /></div>
        <span className="ml-[10px]">Tool Help:</span>
        <div className="ml-[13px] flex h-[37px] w-[36px] items-center justify-center rounded-[4px] bg-[#474747]"><Check /></div>
      </div>
      <div className="flex flex-1 items-center bg-[#535353] pl-[9px] pr-[5px] text-[#858585]">
        <Grip />
        <div className="ml-[16px] flex h-[64px] w-[225px] items-center justify-center gap-[8px] rounded-[6px] border border-[#4d4d4d]">
          <S w={32} h={34} className="text-[#8a8a8a]"><path d="M17 8C18 14 20 16 26 17C20 18 18 20 17 26C16 20 14 18 8 17C14 16 16 14 17 8Z" /><rect x="3" y="2" width="3" height="3" /><rect x="15" y="1" width="3" height="3" /><rect x="1" y="16" width="3" height="3" /><rect x="26" y="28" width="4" height="3" /></S>
          Scene Presets
        </div>
        <div className="ml-auto flex gap-[9px]">
          <RightIcon>
            <S w={44} h={40}>{[3, 20, 37].map((y) => [5, 22, 39].map((x) => <ellipse key={`${x}-${y}`} cx={x} cy={y} rx="3.5" ry="3.5" />))}</S>
          </RightIcon>
          <RightIcon>
            <S w={56} h={60}>
              <rect x="2" y="2" width="52" height="56" rx="14" fill="none" stroke="currentColor" strokeWidth="2" />
              <path d="M17 8H23V52H17ZM28 8H42V14H34V22H42V28H28Z" />
            </S>
          </RightIcon>
          <RightIcon>
            <S w={44} h={44}><rect x="0" y="0" width="2" height="44" /><rect x="8" y="10" width="20" height="13" /><rect x="8" y="27" width="34" height="13" /></S>
          </RightIcon>
          <RightIcon>
            <S w={44} h={50}>
              <path d="M22 0V50M0 25H44" stroke="currentColor" strokeWidth="2" opacity=".5" />
              {[[22, 4], [22, 45], [5, 25], [22, 25], [39, 25]].map(([x, y]) => <ellipse key={`${x}${y}`} cx={x} cy={y} rx="5" ry="5" />)}
            </S>
          </RightIcon>
          <RightIcon>
            <S w={52} h={12}>
              <path d="M0 6H52" stroke="currentColor" strokeWidth="2" opacity=".5" />
              {[8, 26, 44].map((x) => <ellipse key={x} cx={x} cy={6} rx="5.5" ry="6" />)}
            </S>
          </RightIcon>
          <RightIcon>
            <S w={36} h={52}><path d="M24 6C8 14 4 24 4 30C4 38 12 44 24 48" fill="none" stroke="currentColor" strokeWidth="6" /><path d="M20 2L32 10L20 12ZM20 42L32 48L20 52Z" /></S>
          </RightIcon>
          <RightIcon w={64}>
            <S w={56} h={28}><path d="M0 1H56M0 27H56" stroke="currentColor" strokeWidth="2" /><rect x="2" y="6" width="14" height="16" /><rect x="20" y="6" width="16" height="16" /><rect x="40" y="6" width="14" height="16" /></S>
          </RightIcon>
        </div>
      </div>
    </div>
  </>
);

const Status = () => (
  <div className="flex h-[51px] shrink-0 items-center bg-[#474747] pl-[8px] text-[#727272]">
    <Grip className="text-[#5c5c5c]" />
    <S w={32} h={40} className="ml-[20px] text-[#9a9a9a]">
      <path fillRule="evenodd" d="M2 2H30V30H12L10 38V30H2ZM7 8V11H25V8ZM7 14V17H25V14ZM7 20V23H25V20Z" />
    </S>
    <div className="ml-[13px] flex h-[40px] w-[41px] items-center justify-center rounded-[5px] bg-[#5d5d5d] text-[#222222]">0</div>
    <i className="ml-[20px] block h-[12px] w-[12px] rounded-full bg-[#7a7a7a]" />
    <span className="ml-[13px]">Imported preset.</span>
  </div>
);

export default function App() {
  return (
    <div className="relative flex h-[2160px] w-[3840px] flex-col overflow-hidden bg-[#232323] font-['Lato',sans-serif] text-[27px] leading-none">
      <TopBar />
      <div className="mt-[13px] flex min-h-0 flex-1 gap-[13px] pb-[5px]">
        <div className="flex w-[1204px] shrink-0 flex-col gap-[13px]">
          <Assets />
          <AttributeEditor />
        </div>
        <div className="flex flex-1 flex-col gap-[14px]">
          <div className="flex h-[1219px] shrink-0 gap-[13px]">
            <Toolbox />
            <Viewport />
            <div className="flex flex-1 flex-col gap-[14px]">
              <ColorPanel />
              <AlignPanel />
            </div>
          </div>
          <SceneWindow />
          <Status />
        </div>
      </div>
      <div className="absolute left-[3548px] top-[1877px] flex h-[204px] w-[204px] items-center justify-center rounded-full bg-white shadow-[inset_0_0_10px_#dddddd]">
        <svg width={98} height={67} viewBox="0 0 98 67">
          <path d="M22 0L49 36L76 0L98 33L73 67H26L0 33Z" fill="#cc0000" />
        </svg>
      </div>
    </div>
  );
}
